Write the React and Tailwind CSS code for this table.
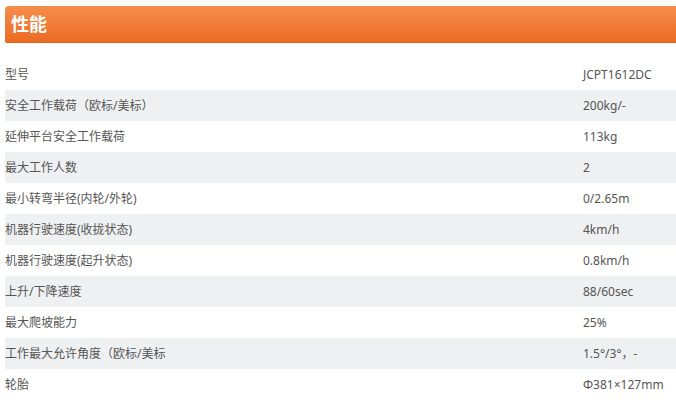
const specs = [
  ["型号", "JCPT1612DC"],
  ["安全工作载荷（欧标/美标）", "200kg/-"],
  ["延伸平台安全工作载荷", "113kg"],
  ["最大工作人数", "2"],
  ["最小转弯半径(内轮/外轮)", "0/2.65m"],
  ["机器行驶速度(收拢状态)", "4km/h"],
  ["机器行驶速度(起升状态)", "0.8km/h"],
  ["上升/下降速度", "88/60sec"],
  ["最大爬坡能力", "25%"],
  ["工作最大允许角度（欧标/美标", "1.5°/3°，-"],
  ["轮胎", "Φ381×127mm"],
];

export default function App() {
  return (
    <div className="w-[676px] h-[420px] bg-white overflow-hidden pt-[6px] pl-[5px] font-['Noto_Sans','Noto_Sans_CJK_SC',sans-serif]">
      <div className="h-[37px] rounded-tl-[4px] rounded-bl-[2px] bg-gradient-to-b from-[#f58d4b] to-[#ec6b1f] border-b border-[#e2621a] flex items-center pl-[6px]">
        <h2 className="text-[18px] font-bold text-white leading-none">性能</h2>
      </div>
      <div className="mt-[16px]">
        {specs.map(([label, value], i) => (
          <div
            key={label}
            className={`h-[31px] flex items-center text-[12px] text-[#555] leading-none ${i % 2 === 1 ? "bg-[#eff0f2]" : ""}`}
          >
            <div className="w-[578px] shrink-0">{label}</div>
            <div>{value}</div>
          </div>
        ))}
      </div>
    </div>
  );
}
